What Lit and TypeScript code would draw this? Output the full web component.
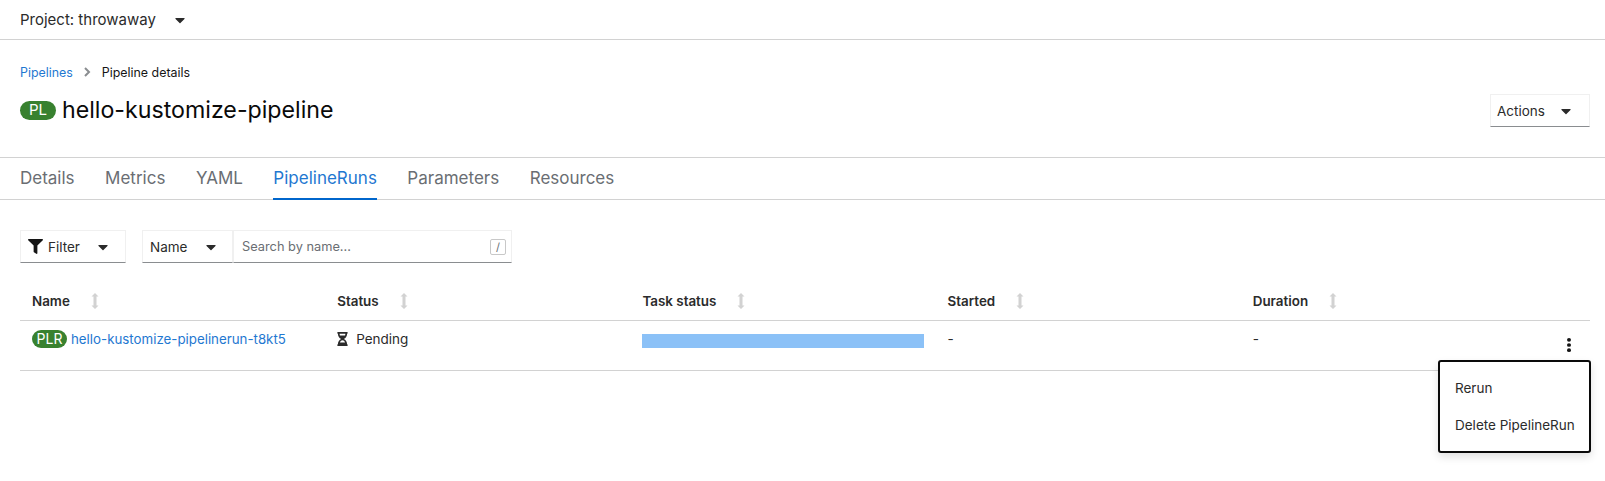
import { LitElement, html, css } from 'lit';
import { customElement } from 'lit/decorators.js';

const caret = html`<svg class="caret" viewBox="0 0 320 512" fill="currentColor"><path d="M31.3 192h257.3c17.8 0 26.7 21.5 14.1 34.1L174.1 354.8c-7.8 7.8-20.5 7.8-28.3 0L17.2 226.1C4.6 213.5 13.5 192 31.3 192z" /></svg>`;

const sortIcon = html`<svg class="sort" viewBox="0 0 8 16" fill="currentColor"><path d="M4 0 7.5 3.5H5.5v9h2L4 16 .5 12.5h2v-9h-2z" /></svg>`;

@customElement('app-root')
export class AppRoot extends LitElement {
  static styles = css`
    :host {
      display: block;
      position: relative;
      height: 481px;
      overflow: hidden;
      background: #fff;
      color: #151515;
      font-family: Inter, 'Noto Sans', sans-serif;
      font-size: 13.5px;
    }
    .caret {
      width: 10px;
      height: 16px;
      flex: none;
    }
    .project {
      display: flex;
      align-items: center;
      height: 39px;
      padding-left: 20px;
      border-bottom: 1px solid #d2d2d2;
      font-size: 15px;
      color: #2b2b2b;
    }
    .project .caret {
      margin-left: 19px;
    }
    .head {
      height: 117px;
      padding: 0 15px 0 20px;
      border-bottom: 1px solid #d2d2d2;
      display: flex;
      justify-content: space-between;
    }
    .crumbs {
      display: flex;
      align-items: center;
      margin-top: 23px;
      height: 18px;
      font-size: 12.4px;
    }
    .crumbs a {
      color: #1f78d1;
    }
    .crumbs svg {
      width: 7px;
      height: 10px;
      margin: 0 11px;
      color: #8a8d90;
    }
    .title {
      display: flex;
      align-items: center;
      margin-top: 11px;
      font-size: 23.2px;
      line-height: 36px;
      color: #0a0a0a;
    }
    .badge {
      display: inline-flex;
      align-items: center;
      justify-content: center;
      background: #38812f;
      color: #fff;
      border-radius: 10px;
      flex: none;
    }
    .title .badge {
      width: 36px;
      height: 19px;
      font-size: 15px;
      margin-right: 6px;
    }
    .dropdown {
      display: flex;
      align-items: center;
      justify-content: space-between;
      box-sizing: border-box;
      height: 33px;
      border: 1px solid #f0f0f0;
      border-bottom: 1px solid #8a8d90;
      background: #fff;
      color: #2b2b2b;
    }
    .actions {
      width: 100px;
      margin-top: 54px;
      padding: 0 18px 0 6px;
    }
    .tabs {
      display: flex;
      gap: 30.5px;
      height: 41px;
      padding: 0 20px;
      border-bottom: 1px solid #d2d2d2;
      font-size: 17px;
      color: #6a6e73;
    }
    .tab {
      display: flex;
      align-items: center;
      box-sizing: border-box;
      height: 42px;
      padding-bottom: 3px;
    }
    .tab.active {
      color: #1f78d1;
      border-bottom: 2px solid #06c;
      padding-bottom: 1px;
    }
    .toolbar {
      display: flex;
      gap: 16px;
      padding: 30px 20px 0;
    }
    .filter {
      width: 106px;
      padding: 0 17px 0 7px;
    }
    .funnel {
      width: 15px;
      height: 15px;
      margin-right: 5px;
      color: #151515;
    }
    .filter span {
      flex: 1;
    }
    .search {
      display: flex;
    }
    .name-select {
      width: 91px;
      padding: 0 16px 0 7px;
    }
    .input {
      width: 279px;
      box-sizing: border-box;
      height: 33px;
      display: flex;
      align-items: center;
      justify-content: space-between;
      border: 1px solid #f0f0f0;
      border-bottom: 1px solid #8a8d90;
      padding: 0 5px 0 8px;
      color: #6a6e73;
      font-size: 12.8px;
    }
    .slash {
      width: 14px;
      height: 14px;
      border: 1px solid #c8c8c8;
      border-radius: 2px;
      display: flex;
      align-items: center;
      justify-content: center;
      font-size: 11px;
    }
    .table {
      margin: 17px 15px 0 20px;
    }
    .row {
      display: grid;
      grid-template-columns: repeat(5, 305.2px);
      border-bottom: 1px solid #d2d2d2;
      padding-left: 12px;
    }
    .row.header {
      box-sizing: border-box;
      height: 41px;
      padding-top: 2px;
      align-items: center;
      font-weight: 600;
      font-size: 13.4px;
      color: #2b2b2b;
    }
    .row.body {
      height: 50px;
      padding-top: 8px;
      box-sizing: border-box;
      align-items: start;
    }
    .th {
      display: flex;
      align-items: center;
    }
    .th .label {
      margin-right: 21px;
    }
    .sort {
      width: 8px;
      height: 16px;
      color: #d2d2d2;
    }
    .cell {
      display: flex;
      align-items: center;
      height: 19px;
      color: #2b2b2b;
    }
    .cell .badge {
      width: 35px;
      height: 18px;
      font-size: 14px;
      margin-right: 4px;
    }
    .cell a {
      color: #1f78d1;
      font-size: 13.3px;
    }
    .hourglass {
      width: 11px;
      height: 14px;
      margin-right: 8px;
    }
    .bar {
      width: 282px;
      height: 14px;
      margin-top: 4px;
      background: #8bc1f7;
    }
    .kebab {
      position: absolute;
      left: 1567px;
      top: 338px;
      width: 4px;
      height: 14px;
      color: #151515;
    }
    .menu {
      position: absolute;
      left: 1438px;
      top: 360px;
      width: 153px;
      height: 93px;
      box-sizing: border-box;
      padding-top: 7px;
      background: #fff;
      border: 2px solid #0a0a0a;
      border-radius: 3px;
      box-shadow: 0 4px 8px rgba(3, 3, 3, 0.12);
      color: #2b2b2b;
    }
    .item {
      height: 37px;
      display: flex;
      align-items: center;
      padding-left: 15px;
    }
  `;

  render() {
    const columns = ['Name', 'Status', 'Task status', 'Started', 'Duration'];
    return html`
      <div class="project">Project: throwaway ${caret}</div>
      <div class="head">
        <div>
          <div class="crumbs">
            <a>Pipelines</a>
            <svg viewBox="0 0 7 10" fill="none" stroke="currentColor" stroke-width="2"><path d="M1 1l4 4-4 4" /></svg>
            <span>Pipeline details</span>
          </div>
          <div class="title"><span class="badge">PL</span>hello-kustomize-pipeline</div>
        </div>
        <div class="dropdown actions"><span>Actions</span>${caret}</div>
      </div>
      <div class="tabs">
        <div class="tab">Details</div>
        <div class="tab">Metrics</div>
        <div class="tab">YAML</div>
        <div class="tab active">PipelineRuns</div>
        <div class="tab">Parameters</div>
        <div class="tab">Resources</div>
      </div>
      <div class="toolbar">
        <div class="dropdown filter">
          <svg class="funnel" viewBox="0 0 512 512" fill="currentColor"><path d="M487.976 0H24.028C2.71 0-8.047 25.866 7.058 40.971L192 225.941V432c0 7.831 3.821 15.17 10.237 19.662l80 55.98C298.02 518.69 320 507.493 320 487.98V225.941l184.947-184.97C520.021 25.896 509.338 0 487.976 0z" /></svg>
          <span>Filter</span>${caret}
        </div>
        <div class="search">
          <div class="dropdown name-select"><span>Name</span>${caret}</div>
          <div class="input"><span>Search by name...</span><span class="slash">/</span></div>
        </div>
      </div>
      <div class="table">
        <div class="row header">
          ${columns.map((c) => html`<div class="th"><span class="label">${c}</span>${sortIcon}</div>`)}
        </div>
        <div class="row body">
          <div class="cell"><span class="badge">PLR</span><a>hello-kustomize-pipelinerun-t8kt5</a></div>
          <div class="cell">
            <svg class="hourglass" viewBox="0 0 384 512" fill="currentColor"><path d="M360 0H24C10.745 0 0 10.745 0 24v16c0 13.255 10.745 24 24 24 0 90.965 51.016 167.734 120.842 192C75.016 280.266 24 357.035 24 448c-13.255 0-24 10.745-24 24v16c0 13.255 10.745 24 24 24h336c13.255 0 24-10.745 24-24v-16c0-13.255-10.745-24-24-24 0-90.965-51.016-167.734-120.842-192C308.984 231.734 360 154.965 360 64c13.255 0 24-10.745 24-24V24c0-13.255-10.745-24-24-24zm-75.078 384H99.08c17.059-46.797 52.096-80 92.92-80 40.821 0 75.862 33.196 92.922 80zm.019-256H99.078C91.988 108.548 88 86.748 88 64h208c0 22.805-3.987 44.587-11.059 64z" /></svg>
            Pending
          </div>
          <div class="cell"><div class="bar"></div></div>
          <div class="cell">-</div>
          <div class="cell">-</div>
        </div>
      </div>
      <svg class="kebab" viewBox="0 0 4 15" preserveAspectRatio="none" fill="currentColor"><circle cx="2" cy="2" r="2" /><circle cx="2" cy="7.5" r="2" /><circle cx="2" cy="13" r="2" /></svg>
      <div class="menu">
        <div class="item">Rerun</div>
        <div class="item">Delete PipelineRun</div>
      </div>
    `;
  }
}
